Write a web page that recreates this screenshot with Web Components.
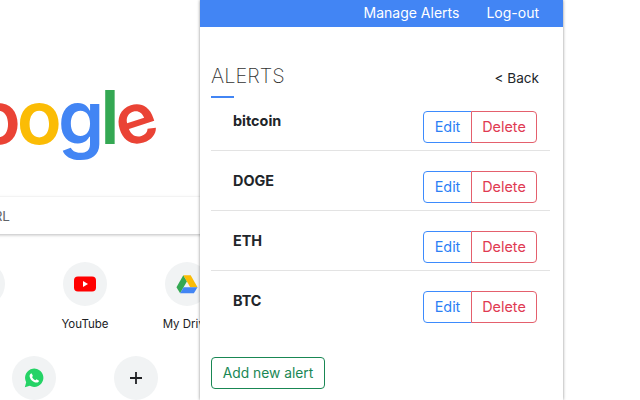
<!DOCTYPE html>
<html lang="en">
<head>
<meta charset="UTF-8">
<title>Alerts</title>
<style>
    html, body { margin: 0; height: 100%; background: #fff; }
    body { font-family: Inter, "Liberation Sans", sans-serif; overflow: hidden; }
    .wrap { display: flex; height: 400px; width: 640px; overflow: hidden; }
</style>
</head>
<body>
<template id="ntp-tile-template">
    <style>
        :host { display: flex; flex-direction: column; align-items: center; width: 102px; flex: none; }
        .circle { width: 44px; height: 44px; border-radius: 50%; background: #f1f3f4; display: flex; align-items: center; justify-content: center; }
        .label { margin-top: 10px; font-size: 11.5px; line-height: 16px; color: #202124; white-space: nowrap; }
    </style>
    <div class="circle"><slot name="icon"></slot></div>
    <div class="label"><slot></slot></div>
</template>

<template id="new-tab-template">
    <style>
        :host { display: block; width: 200px; flex: none; height: 400px; overflow: hidden; background: #fff; }
        .logo { display: flex; justify-content: flex-end; padding-right: 49px; height: 197px; font: 600 74px/234px Inter, sans-serif; letter-spacing: -4px; white-space: nowrap; }
        .b { color: #4285f4; } .r { color: #ea4335; } .y { color: #fbbc05; } .g { color: #34a853; }
        .e { display: inline-block; font-size: 70px; margin-left: -2px; transform: rotate(-18deg); }
        .search { margin-left: -60px; height: 37px; width: 300px; background: #fff; box-shadow: 0 1px 3px rgba(60,64,67,.35); display: flex; align-items: center; justify-content: flex-end; padding-right: 230px; box-sizing: border-box; font-size: 13.5px; color: #5f6368; white-space: nowrap; }
        .row { display: flex; width: 340px; }
        .row1 { margin: 28px 0 0 -68px; }
        .row2 { margin: 24px 0 0 -17px; }
    </style>
    <div class="logo"><span><span class="b">G</span><span class="r">o</span><span class="y">o</span><span class="b">g</span><span class="g">l</span><span class="r e">e</span></span></div>
    <div class="search"><span>Search Google or type a URL</span></div>
    <div class="row row1"><slot name="row1"></slot></div>
    <div class="row row2"><slot name="row2"></slot></div>
</template>

<template id="alert-row-template">
    <style>
        :host { display: flex; height: 60px; box-sizing: border-box; padding: 0 13px 0 22px; border-bottom: 1px solid #e3e3e3; justify-content: space-between; }
        :host([last]) { border-bottom: 0; }
        .name { font-size: 14.4px; font-weight: 700; line-height: 20px; padding-top: 20px; color: #212529; }
        .btns { display: flex; padding-top: 20px; height: 32px; }
        button { font: 14.4px/20px Inter, "Liberation Sans", sans-serif; height: 32px; padding: 0; background: #fff; cursor: pointer; box-sizing: border-box; }
        .edit { width: 49px; color: #2b7ff5; border: 1px solid #3d8bfd; border-radius: 4px 0 0 4px; }
        .del { width: 66px; margin-left: -1px; color: #e03a52; border: 1px solid #e4606d; border-radius: 0 4px 4px 0; }
    </style>
    <div class="name"><slot></slot></div>
    <div class="btns"><button class="edit">Edit</button><button class="del">Delete</button></div>
</template>

<template id="alerts-popup-template">
    <style>
        :host { display: block; width: 363px; flex: none; height: 400px; overflow: hidden; background: #fff; box-shadow: 0 0 3px rgba(0,0,0,.45); z-index: 1; position: relative; color: #212529; }
        .nav { height: 27px; background: #4285f4; display: flex; justify-content: flex-end; gap: 27px; padding-right: 24px; padding-bottom: 2px; box-sizing: border-box; align-items: center; color: #fff; font-size: 14px; }
        .body { padding: 0 13px 0 11px; }
        .head { display: flex; justify-content: space-between; padding-top: 37px; height: 32px; }
        h1 { margin: 0; font: 200 20px/24px Inter, sans-serif; color: #333; }
        .back { font-size: 13.6px; line-height: 28px; padding-right: 11px; color: #212529; }
        .rule { width: 23px; height: 2px; background: #4285f4; }
        .list { margin-top: -7px; }
        .add { display: block; margin-top: 26px; height: 32px; width: 114px; box-sizing: border-box; border: 1px solid #198754; border-radius: 4px; background: #fff; color: #198754; font: 13.8px/20px Inter, sans-serif; padding: 0; }
    </style>
    <div class="nav"><span>Manage Alerts</span><span>Log-out</span></div>
    <div class="body">
        <div class="head"><h1>ALERTS</h1><span class="back">&lt; Back</span></div>
        <div class="rule"></div>
        <div class="list"><slot></slot></div>
        <button class="add">Add new alert</button>
    </div>
</template>

<div class="wrap">
    <new-tab>
        <ntp-tile slot="row1"></ntp-tile>
        <ntp-tile slot="row1">
            <svg slot="icon" width="24" height="24" viewBox="0 0 24 24"><rect x="1" y="4.500" width="22" height="15" rx="4" fill="#f00"/><path d="M10 9v6l5-3z" fill="#fff"/></svg>
            YouTube
        </ntp-tile>
        <ntp-tile slot="row1">
            <svg slot="icon" width="22" height="22" viewBox="0 0 24 24"><path d="M8 2.500 0.500 15.500 4.500 22 12 9z" fill="#34a853"/><path d="M8 2.500h8L23.500 15.500h-8z" fill="#fbbc05"/><path d="M4.500 22h15l4-6.500H8.300z" fill="#4285f4"/></svg>
            My Drive
        </ntp-tile>
        <ntp-tile slot="row2">
            <svg slot="icon" width="20" height="20" viewBox="0 0 24 24"><path d="M1 23l1.600-6A11 11 0 1 1 7 21.400z" fill="#25d366"/><path d="M8.500 6.500c-.5 0-1.800 1-1.800 3 0 3.500 4.500 8 8.300 8 2 0 3-1.300 3-2.300l-3-1.600-1.300 1.200c-1.800-.8-3.300-2.300-4-4l1-1.300-1.400-3z" fill="#fff"/></svg>
        </ntp-tile>
        <ntp-tile slot="row2">
            <svg slot="icon" width="14" height="14" viewBox="0 0 14 14"><path d="M7 1v12M1 7h12" stroke="#202124" stroke-width="1.800" fill="none"/></svg>
        </ntp-tile>
    </new-tab>
    <alerts-popup>
        <alert-row>bitcoin</alert-row>
        <alert-row>DOGE</alert-row>
        <alert-row>ETH</alert-row>
        <alert-row last>BTC</alert-row>
    </alerts-popup>
</div>
<script>
    function define (tag, templateId) {
        customElements.define(tag, class extends HTMLElement {
            constructor () {
                super();
                this.attachShadow({ mode: "open" });
                this.shadowRoot.appendChild(document.getElementById(templateId).content.cloneNode(true));
            }
        });
    }
    define("ntp-tile", "ntp-tile-template");
    define("new-tab", "new-tab-template");
    define("alert-row", "alert-row-template");
    define("alerts-popup", "alerts-popup-template");
</script>
</body>
</html>
